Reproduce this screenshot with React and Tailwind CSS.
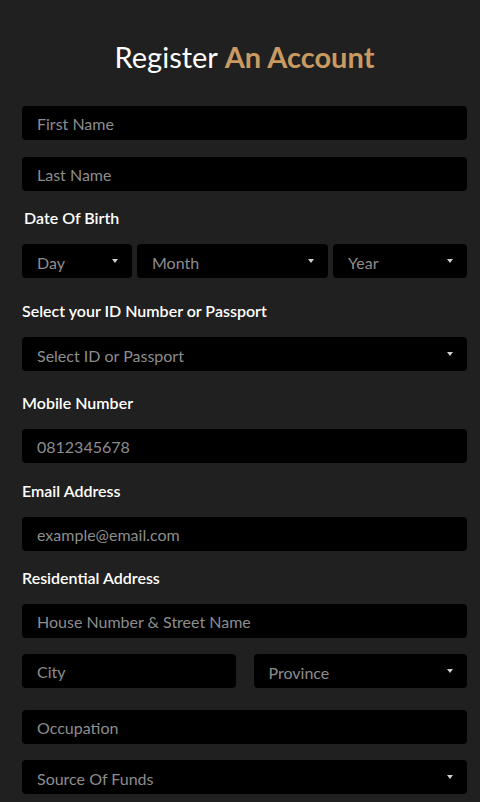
import React from 'react'

const font = { fontFamily: 'Lato, "Open Sans", sans-serif' }

function Field({ placeholder, className = '' }) {
  return (
    <input
      type="text"
      placeholder={placeholder}
      className={`block h-[34px] w-full min-w-0 rounded-[4px] bg-black pl-[15px] pt-[1px] text-[16px] text-[#8d8d8d] outline-none placeholder:text-[#8d8d8d] ${className}`}
    />
  )
}

function Select({ label, className = '' }) {
  return (
    <div
      className={`flex h-[34px] items-center justify-between rounded-[4px] bg-black pl-[15px] pr-[14px] text-[16px] text-[#8d8d8d] ${className}`}
    >
      <span className="pt-[3px]">{label}</span>
      <span className="h-0 w-0 border-x-[3.5px] border-t-[4px] border-x-transparent border-t-[#cfcfcf]" />
    </div>
  )
}

function Label({ children, className = '' }) {
  return (
    <div className={`h-[20px] text-[16px] font-semibold leading-[20px] text-white ${className}`}>
      {children}
    </div>
  )
}

export default function App() {
  return (
    <div className="min-h-[802px] w-full bg-[#202020] pl-[22px] pr-[13px]" style={font}>
      <h1 className="pt-[38px] text-center text-[29px] leading-[38px] text-white">
        Register <span className="font-bold text-[#c99a62]">An Account</span>
      </h1>

      <form className="mt-[30px] pb-[8px]">
        <Field placeholder="First Name" />
        <Field placeholder="Last Name" className="mt-[17px]" />

        <Label className="mt-[17px] pl-[2px]">Date Of Birth</Label>
        <div className="mt-[16px] flex gap-[5px]">
          <Select label="Day" className="w-[110px]" />
          <Select label="Month" className="w-[191px]" />
          <Select label="Year" className="min-w-0 flex-1" />
        </div>

        <Label className="mt-[23px]">Select your ID Number or Passport</Label>
        <Select label="Select ID or Passport" className="mt-[16px]" />

        <Label className="mt-[22px]">Mobile Number</Label>
        <Field placeholder="0812345678" className="mt-[16px]" />

        <Label className="mt-[18px]">Email Address</Label>
        <Field placeholder="example@email.com" className="mt-[16px]" />

        <Label className="mt-[17px]">Residential Address</Label>
        <Field placeholder="House Number & Street Name" className="mt-[16px]" />

        <div className="mt-[16px] grid grid-cols-2 gap-[18px]">
          <Field placeholder="City" />
          <Select label="Province" className="min-w-0" />
        </div>

        <Field placeholder="Occupation" className="mt-[22px]" />
        <Select label="Source Of Funds" className="mt-[16px]" />
      </form>
    </div>
  )
}
